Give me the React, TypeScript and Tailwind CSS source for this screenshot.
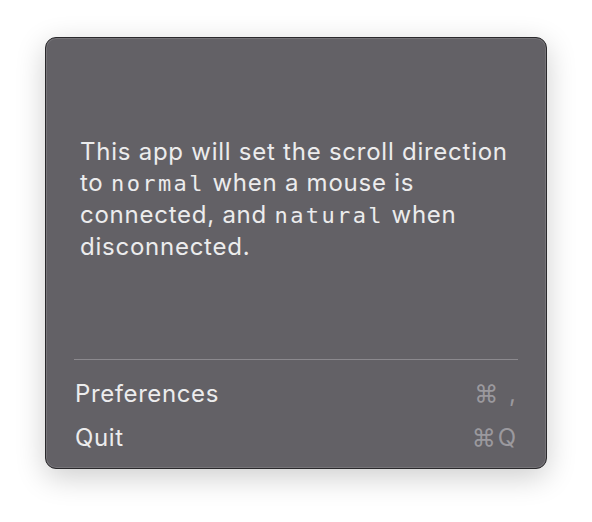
const mono = "font-['DejaVu_Sans_Mono',monospace] text-[22px] tracking-[2.4px]";

const MenuRow = ({ label, shortcut }: { label: string; shortcut: string }) => (
  <div className="flex h-[44px] items-center justify-between pl-[29px] pr-[28px]">
    <span className="text-[#ececed] tracking-[0.6px]">{label}</span>
    <span className="text-[#9b999e] tracking-[2px]">{shortcut}</span>
  </div>
);

export default function App() {
  return (
    <div className="flex h-[522px] w-[592px] justify-center bg-white pt-[37px] font-['Inter','Liberation_Sans',sans-serif] text-[24px]">
      <div className="flex h-[432px] w-[502px] flex-col rounded-[11px] border border-[#2a292c] bg-[#636166] shadow-[0_8px_30px_rgba(0,0,0,0.2),inset_0_0_0_1px_rgba(255,255,255,0.12)]">
        <div className="flex flex-1 items-start px-[34px] pt-[98px]">
          <p className="text-[24px] leading-[31px] tracking-[0.75px] text-[#ececed]">
            This app will set the scroll direction
            <br />
            to <span className={mono}>normal</span> when a mouse is
            <br />
            connected, and <span className={mono}>natural</span> when
            <br />
            disconnected.
          </p>
        </div>
        <div className="mx-[28px] h-px bg-[#8b898e]" />
        <div className="flex flex-col pb-[8px] pt-[12px]">
          <MenuRow label="Preferences" shortcut="⌘ ," />
          <MenuRow label="Quit" shortcut="⌘Q" />
        </div>
      </div>
    </div>
  );
}
